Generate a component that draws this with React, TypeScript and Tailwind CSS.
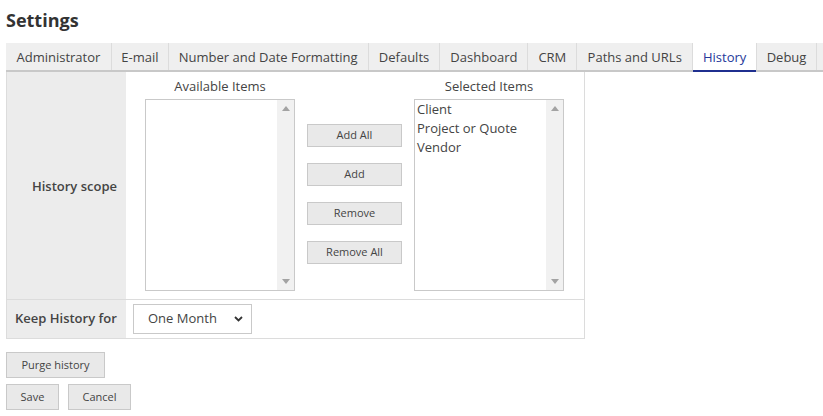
import React from "react";

const tabs: [string, number][] = [
  ["Administrator", 106],
  ["E-mail", 57],
  ["Number and Date Formatting", 200],
  ["Defaults", 72],
  ["Dashboard", 88],
  ["CRM", 49],
  ["Paths and URLs", 116],
  ["History", 64],
  ["Debug", 60],
];

function ListBox({ items }: { items: string[] }) {
  return (
    <div className="flex h-[192px] w-[150px] border border-[#c9c9c9] bg-white">
      <div className="flex-1 pl-[2px] text-[13px] leading-[19px] text-[#444]">
        {items.map((i) => (
          <div key={i}>{i}</div>
        ))}
      </div>
      <div className="flex w-[17px] flex-col items-center justify-between bg-[#f1f1f1] py-[6px]">
        <svg width="8" height="5" viewBox="0 0 8 5">
          <path d="M0 5 L4 0 L8 5 Z" fill="#a3a3a3" />
        </svg>
        <svg width="8" height="5" viewBox="0 0 8 5">
          <path d="M0 0 L4 5 L8 0 Z" fill="#a3a3a3" />
        </svg>
      </div>
    </div>
  );
}

function Btn({ children, w }: { children: React.ReactNode; w: string }) {
  return (
    <div
      className={`${w} flex items-center justify-center border border-[#c9c9c9] bg-[#e9e9e9] text-[11px] text-[#444]`}
    >
      {children}
    </div>
  );
}

export default function App() {
  return (
    <div
      className="h-[416px] w-[823px] overflow-hidden bg-white text-[#444]"
      style={{ fontFamily: '"Open Sans", sans-serif' }}
    >
      <div className="px-[6px] pt-[8px] text-[18px] font-bold leading-[24px] text-[#333]">
        Settings
      </div>
      <div className="ml-[6px] mt-[11px] flex h-[29px] border-b-2 border-[#c8c8c8]">
        {tabs.map(([t, w]) => {
          const active = t === "History";
          return (
            <div
              key={t}
              style={{ width: w }}
              className={`relative flex items-center justify-center border-r border-[#dcdcdc] pt-[3px] text-[13px] ${
                active ? "bg-white text-[#25389a]" : "bg-[#efefef] text-[#444]"
              }`}
            >
              {t}
              {active && (
                <div className="absolute bottom-[-2px] left-0 right-0 h-[2px] bg-[#1f2f8f]" />
              )}
            </div>
          );
        })}
        <div className="w-[6px] bg-[#efefef]" />
      </div>
      <div className="ml-[6px] w-[579px] border-x border-b border-[#dcdcdc]">
        <div className="flex h-[228px] border-b border-[#dcdcdc]">
          <div className="flex w-[119px] items-center justify-end bg-[#ececec] pr-[9px] pt-[2px] text-[13px] font-semibold text-[#444]">
            History scope
          </div>
          <div className="flex flex-1 pl-[19px]">
            <div className="flex flex-col items-center">
              <div className="pt-[5px] text-[13px] leading-[18px]">Available Items</div>
              <div className="mt-[4px]">
                <ListBox items={[]} />
              </div>
            </div>
            <div className="ml-[12px] flex flex-col gap-[16px] pt-[52px]">
              <Btn w="w-[95px] h-[23px]">Add All</Btn>
              <Btn w="w-[95px] h-[23px]">Add</Btn>
              <Btn w="w-[95px] h-[23px]">Remove</Btn>
              <Btn w="w-[95px] h-[23px]">Remove All</Btn>
            </div>
            <div className="ml-[12px] flex flex-col items-center">
              <div className="pt-[5px] text-[13px] leading-[18px]">Selected Items</div>
              <div className="mt-[4px]">
                <ListBox items={["Client", "Project or Quote", "Vendor"]} />
              </div>
            </div>
          </div>
        </div>
        <div className="flex h-[38px]">
          <div className="flex w-[119px] items-center bg-[#ececec] pl-[8px] text-[13px] font-semibold text-[#444]">
            Keep History for
          </div>
          <div className="flex items-center pl-[7px]">
            <div className="flex h-[30px] w-[119px] items-center justify-between border border-[#c9c9c9] bg-white pl-[14px] pr-[8px] text-[13px]">
              <span>One Month</span>
              <svg width="9" height="6" viewBox="0 0 9 6">
                <path d="M1 1 L4.5 4.5 L8 1" stroke="#333" strokeWidth="1.8" fill="none" />
              </svg>
            </div>
          </div>
        </div>
      </div>
      <div className="ml-[6px] mt-[13px]">
        <Btn w="w-[99px] h-[26px]">
          <span className="text-[11px]">Purge history</span>
        </Btn>
      </div>
      <div className="ml-[6px] mt-[6px] flex gap-[9px]">
        <Btn w="w-[53px] h-[26px]">Save</Btn>
        <Btn w="w-[63px] h-[26px]">Cancel</Btn>
      </div>
    </div>
  );
}
